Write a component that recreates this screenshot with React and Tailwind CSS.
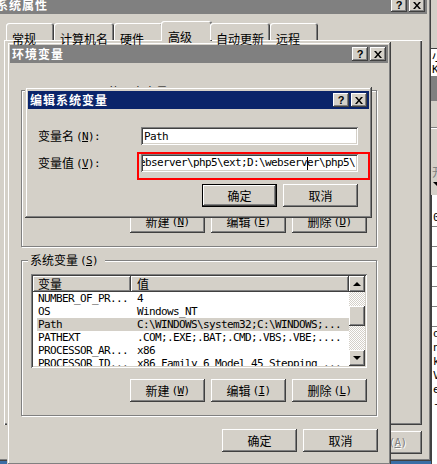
const cjk = "font-['Noto_Sans_CJK_SC',sans-serif] text-[12px] leading-[14px]";
const mono = "font-['DejaVu_Sans_Mono','Noto_Sans_CJK_SC',monospace] text-[11px] leading-[13px] tracking-[-0.62px]";
const raised =
  "bg-[#d4d0c8] shadow-[inset_-1px_-1px_0_#404040,inset_1px_1px_0_#ffffff,inset_-2px_-2px_0_#808080,inset_2px_2px_0_#d4d0c8]";
const sunken =
  "shadow-[inset_1px_1px_0_#808080,inset_-1px_-1px_0_#ffffff,inset_2px_2px_0_#404040,inset_-2px_-2px_0_#d4d0c8]";
const frame =
  "bg-[#d4d0c8] shadow-[inset_-1px_-1px_0_#404040,inset_1px_1px_0_#d4d0c8,inset_-2px_-2px_0_#808080,inset_2px_2px_0_#ffffff]";
const etched = "border border-[#808080] shadow-[inset_1px_1px_0_#ffffff,1px_1px_0_#ffffff]";
const checker =
  "bg-[image:repeating-conic-gradient(#d4d0c8_0_25%,#ffffff_0_50%)] bg-size-[2px_2px] bg-[length:2px_2px]";

const sysVars = [
  ["NUMBER_OF_PR...", "4"],
  ["OS", "Windows_NT"],
  ["Path", "C:\\WINDOWS\\system32;C:\\WINDOWS;...", true],
  ["PATHEXT", ".COM;.EXE;.BAT;.CMD;.VBS;.VBE;...."],
  ["PROCESSOR_AR...", "x86"],
  ["PROCESSOR_ID...", "x86 Family 6 Model 45 Stepping ..."],
];

const tabs = [
  ["常规", "w-[48px]"],
  ["计算机名", "w-[60px]"],
  ["硬件", "w-[49px]"],
  ["高级", "w-[51px]", true],
  ["自动更新", "w-[60px]"],
  ["远程", "w-[48px]"],
];

function XGlyph() {
  return (
    <svg width="8" height="7" viewBox="0 0 8 7">
      <path d="M0 0h2l2 2.4L6 0h2L5 3.5 8 7H6L4 4.6 2 7H0l3-3.5z" fill="#000" />
    </svg>
  );
}

function CapBtn({ children }) {
  return (
    <div className={`w-[16px] h-[14px] flex items-center justify-center ${raised}`}>{children}</div>
  );
}

function TitleBar({ title, color }) {
  return (
    <div className={`flex h-[18px] shrink-0 items-center justify-between pl-[2px] pr-[2px] ${color}`}>
      <span className="font-['Noto_Sans_CJK_SC',sans-serif] text-[12px] font-bold leading-none tracking-[1px] text-white whitespace-nowrap">
        {title}
      </span>
      <div className="flex gap-[2px]">
        <CapBtn>
          <span className="font-['Liberation_Sans',sans-serif] text-[11px] font-bold leading-none">?</span>
        </CapBtn>
        <CapBtn>
          <XGlyph />
        </CapBtn>
      </div>
    </div>
  );
}

function Lbl({ t, k, tail = "" }) {
  return (
    <span className="flex items-center whitespace-nowrap text-black">
      <span className={cjk}>{t}</span>
      {k && (
        <span className={`${mono} ml-[2px]`}>
          (<span className="underline underline-offset-[1px]">{k}</span>){tail}
        </span>
      )}
    </span>
  );
}

function Btn({ children, def, dis }) {
  const inner = (
    <div
      className={`h-full w-full flex items-center justify-center ${raised} ${
        dis ? "text-[#808080] [text-shadow:1px_1px_0_#ffffff]" : ""
      }`}
    >
      {children}
    </div>
  );
  if (def) return <div className="w-[75px] h-[23px] border border-black">{inner}</div>;
  return <div className="w-[75px] h-[23px]">{inner}</div>;
}

function Group({ label, className, top = "-top-[8px]", children }) {
  return (
    <div className={`relative ${etched} ${className}`}>
      <div className={`absolute left-[6px] ${top} bg-[#d4d0c8] pl-[2px] pr-[7px]`}>{label}</div>
      {children}
    </div>
  );
}

function Arrow({ down }) {
  return down ? (
    <div className="w-0 h-0 border-x-[4px] border-x-transparent border-t-[4px] border-t-black" />
  ) : (
    <div className="w-0 h-0 border-x-[4px] border-x-transparent border-b-[4px] border-b-black" />
  );
}

function ListView() {
  return (
    <div className={`w-[336px] h-[94px] bg-white ${sunken} p-[2px] flex`}>
      <div className="w-[316px] h-[90px] overflow-hidden flex flex-col">
        <div className="flex h-[16px] shrink-0">
          <div className={`w-[98px] h-[16px] pl-[5px] flex items-center ${raised}`}>
            <span className={cjk}>变量</span>
          </div>
          <div className={`w-[218px] h-[16px] pl-[6px] flex items-center ${raised}`}>
            <span className={cjk}>值</span>
          </div>
        </div>
        {sysVars.map(([n, v, sel]) => (
          <div key={n} className={`ml-[4px] flex h-[13px] shrink-0 items-center ${sel ? "bg-[#d4d0c8]" : ""}`}>
            <div className={`w-[94px] pl-[1px] whitespace-pre ${mono}`}>{n}</div>
            <div className={`pl-[6px] whitespace-pre ${mono}`}>{v}</div>
          </div>
        ))}
      </div>
      <div className="w-[16px] h-[90px] flex flex-col">
        <div className={`h-[16px] flex items-center justify-center ${raised}`}>
          <Arrow />
        </div>
        <div className={`h-[14px] ${checker}`} />
        <div className={`h-[20px] ${raised}`} />
        <div className={`h-[24px] ${checker}`} />
        <div className={`h-[16px] flex items-center justify-center ${raised}`}>
          <Arrow down />
        </div>
      </div>
    </div>
  );
}

function RightStrip() {
  return (
    <div className="absolute left-[431px] top-0 w-[30px] h-[464px] bg-[#d4d0c8] flex flex-col">
      <div className="h-[48px] shrink-0" />
      <div className="h-[14px] shrink-0 bg-white border-t border-[#404040] pl-[1px] flex items-center">
        <span className={cjk}>小</span>
      </div>
      <div className="h-[14px] shrink-0 bg-white pl-[1px] flex items-center">
        <span className={mono}>K</span>
      </div>
      <div className="h-[25px] shrink-0 bg-[#808080]" />
      <div className="h-[26px] shrink-0" />
      <div className="h-[2px] shrink-0 border-t border-[#808080] bg-white" />
      <div className="h-[30px] shrink-0" />
      <div className="h-[14px] shrink-0 pl-[1px] text-[#808080]">
        <span className={cjk}>开</span>
      </div>
      <div className="h-[22px] shrink-0 flex items-center pl-[2px]">
        <Arrow down />
      </div>
      <div className="flex-1 bg-white border-l border-[#404040] flex flex-col">
        <div className="h-[16px] shrink-0" />
        <div className={`pl-[1px] h-[16px] border-b border-[#808080] ${mono}`}>0</div>
        <div className="h-[20px] border-b border-[#808080]" />
        <div className="h-[20px] border-b border-[#808080]" />
        <div className="h-[20px] border-b border-[#808080]" />
        <div className="h-[20px] border-b border-[#808080]" />
        <div className="h-[20px] border-b border-[#808080]" />
        <div className={`pl-[1px] h-[14px] ${mono}`}>o</div>
        <div className={`pl-[1px] h-[14px] ${mono}`}>ns</div>
        <div className={`pl-[1px] h-[14px] ${mono}`}>k,</div>
        <div className={`pl-[1px] h-[14px] ${mono}`}>V</div>
        <div className={`pl-[1px] h-[14px] ${mono}`}>e</div>
        <div className={`pl-[1px] h-[14px] ${mono}`}>-s</div>
      </div>
    </div>
  );
}

function SysWindow() {
  return (
    <div className={`absolute left-[-10px] top-[-8px] w-[441px] h-[469px] p-[4px] flex flex-col ${frame}`}>
      <TitleBar title="系统属性" color="bg-[#808080]" />
      <div className="relative z-10 mt-[7px] -mb-[1px] flex h-[20px] items-end pl-[12px]">
        {tabs.map(([t, w, sel]) =>
          sel ? (
            <div
              key={t}
              className={`${w} -mx-[2px] h-[20px] rounded-t-[3px] bg-[#d4d0c8] pl-[7px] pt-[3px] shadow-[inset_1px_1px_0_#ffffff,inset_-1px_0_0_#404040,inset_-2px_0_0_#808080]`}
            >
              <span className={cjk}>{t}</span>
            </div>
          ) : (
            <div
              key={t}
              className={`${w} mb-[1px] h-[17px] rounded-t-[3px] bg-[#d4d0c8] pl-[6px] pt-[3px] shadow-[inset_1px_1px_0_#ffffff,inset_-1px_0_0_#404040,inset_-2px_0_0_#808080]`}
            >
              <span className={cjk}>{t}</span>
            </div>
          )
        )}
      </div>
      <div className="ml-[10px] h-[385px] w-[418px] shrink-0 bg-[#d4d0c8] shadow-[inset_1px_1px_0_#ffffff,inset_-1px_-1px_0_#404040,inset_-2px_-2px_0_#808080]" />
      <div className="mt-[6px] flex justify-end gap-[6px] pr-[5px]">
        <Btn>
          <Lbl t="确定" />
        </Btn>
        <Btn>
          <Lbl t="取消" />
        </Btn>
        <Btn dis>
          <span className="flex items-center whitespace-nowrap">
            <span className={cjk}>应用</span>
            <span className={`${mono} ml-[2px] text-[#808080]`}>
              (<span className="underline">A</span>)
            </span>
          </span>
        </Btn>
      </div>
    </div>
  );
}

function EnvWindow() {
  return (
    <div className={`absolute left-[7px] top-[42px] w-[384px] h-[423px] p-[3px] flex flex-col ${frame}`}>
      <TitleBar title="环境变量" color="bg-[#808080]" />
      <div className="flex flex-col pl-[11px]">
        <Group
          top="-top-[6px]"
          className="mt-[27px] h-[157px] w-[356px] flex flex-col justify-end pb-[13px] pr-[9px]"
          label={
            <span className="flex items-center whitespace-nowrap">
              <span className={mono}>Administrator </span>
              <Lbl t="的用户变量" k="U" />
            </span>
          }
        >
          <div className="flex justify-end gap-[6px]">
            <Btn>
              <Lbl t="新建" k="N" />
            </Btn>
            <Btn>
              <Lbl t="编辑" k="E" />
            </Btn>
            <Btn>
              <Lbl t="删除" k="D" />
            </Btn>
          </div>
        </Group>
        <Group className="mt-[13px] h-[156px] w-[356px] pl-[9px] pt-[13px] pr-[9px]" label={<Lbl t="系统变量" k="S" />}>
          <ListView />
          <div className="mt-[11px] flex justify-end gap-[6px]">
            <Btn>
              <Lbl t="新建" k="W" />
            </Btn>
            <Btn>
              <Lbl t="编辑" k="I" />
            </Btn>
            <Btn>
              <Lbl t="删除" k="L" />
            </Btn>
          </div>
        </Group>
        <div className="mt-[13px] flex justify-end gap-[6px] pr-[10px]">
          <Btn>
            <Lbl t="确定" />
          </Btn>
          <Btn>
            <Lbl t="取消" />
          </Btn>
        </div>
      </div>
    </div>
  );
}

function EditDialog() {
  return (
    <div className={`absolute left-[25px] top-[87px] w-[347px] h-[131px] p-[3px] pt-[4px] flex flex-col ${frame}`}>
      <TitleBar title="编辑系统变量" color="bg-[#0a246a]" />
      <div className="flex flex-col pl-[10px] pr-[11px]">
        <div className="mt-[18px] flex h-[18px] items-center justify-between">
          <Lbl t="变量名" k="N" tail=":" />
          <div className={`h-[18px] w-[217px] bg-white p-[2px] ${sunken}`}>
            <div className="h-full overflow-hidden flex items-center">
              <span className={`pl-[1px] whitespace-pre ${mono}`}>Path</span>
            </div>
          </div>
        </div>
        <div className="mt-[9px] flex h-[18px] items-center justify-between">
          <Lbl t="变量值" k="V" tail=":" />
          <div className={`h-[18px] w-[217px] bg-white p-[2px] ${sunken}`}>
            <div className="h-full overflow-hidden flex items-center">
              <span className={`-ml-[4px] whitespace-pre ${mono}`}>
                ebserver\php5\ext;D:\webserv
                <span className="inline-block h-[13px] w-[1px] -mr-[1px] bg-black align-middle" />
                er\php5\
              </span>
            </div>
          </div>
        </div>
        <div className="mt-[12px] flex justify-end gap-[6px]">
          <Btn def>
            <Lbl t="确定" />
          </Btn>
          <Btn>
            <Lbl t="取消" />
          </Btn>
        </div>
      </div>
    </div>
  );
}

export default function App() {
  return (
    <div className="relative h-[464px] w-[437px] overflow-hidden bg-[#3a6ea5] text-black">
      <RightStrip />
      <SysWindow />
      <EnvWindow />
      <EditDialog />
      <div className="absolute left-[137px] top-[152px] h-[28px] w-[233px] border-2 border-[#ff0000]" />
    </div>
  );
}
